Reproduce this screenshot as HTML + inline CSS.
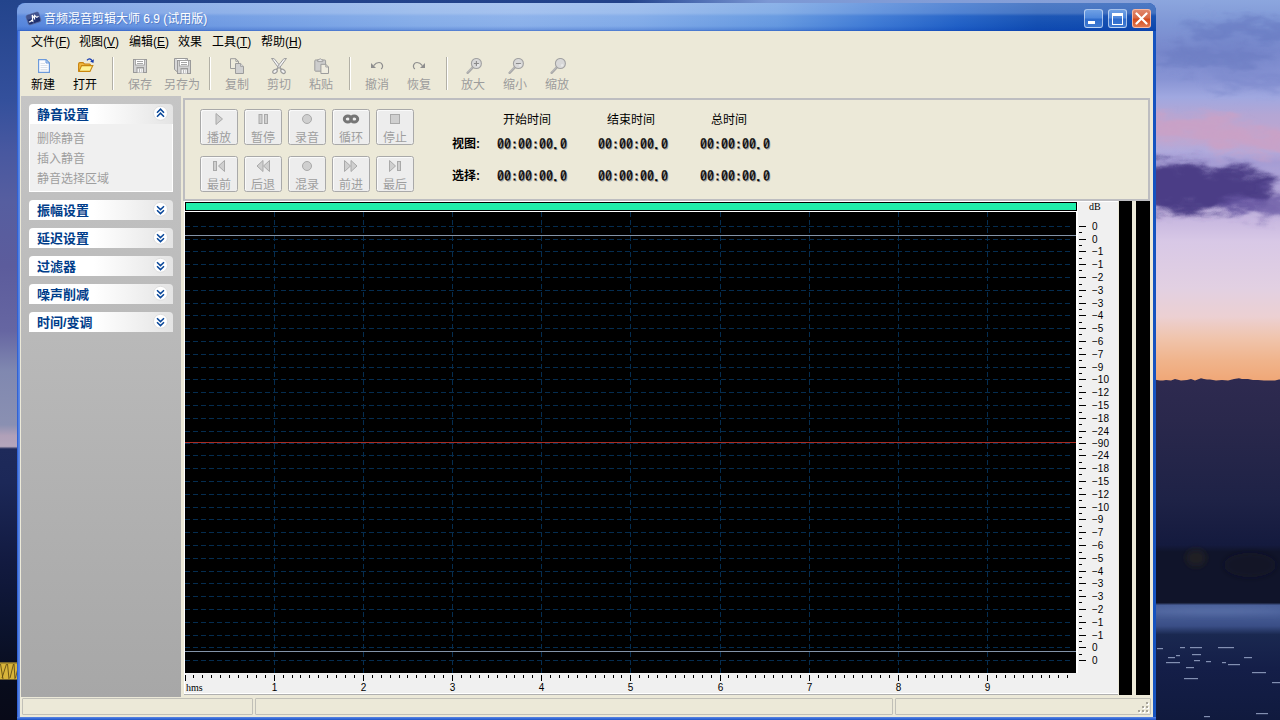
<!DOCTYPE html>
<html lang="zh-CN"><head><meta charset="utf-8"><title>音频混音剪辑大师 6.9 (试用版)</title>
<style>
html,body{margin:0;padding:0;width:1280px;height:720px;overflow:hidden;background:#1a2040;}
body{position:relative;font-family:"Liberation Sans","Noto Sans CJK SC",sans-serif;font-size:12px;color:#000;}
.a{position:absolute;}
#wall{position:absolute;left:0;top:0;}
#win{position:absolute;left:17px;top:3px;width:1139px;height:720px;border-radius:8px 8px 0 0;background:#1553c0;overflow:hidden;}
#lb{position:absolute;left:0;top:28px;width:3px;height:700px;background:linear-gradient(90deg,#2252cc,#4c7ce0 45%,#668ee6 100%);}
#rb{position:absolute;left:1136px;top:28px;width:3px;height:700px;background:#1553c0;}
#bb{position:absolute;left:0;top:714px;width:1139px;height:6px;background:linear-gradient(180deg,#5c88e2 0,#3a6cd8 1.5px,#1c54c4 3px,#1a50c0 6px);}
#title{position:absolute;left:0;top:0;width:1139px;height:28px;
 background:linear-gradient(180deg,rgba(255,255,255,.26) 0,rgba(255,255,255,.22) 10px,rgba(255,255,255,.05) 13px,rgba(255,255,255,0) 23px,rgba(0,50,170,.22) 27px,rgba(0,50,170,.5) 28px),
 linear-gradient(90deg,#5585dc 0,#6592e0 100px,#749fe4 250px,#84ace8 400px,#8ab0ea 500px,#80aae8 620px,#6498e0 760px,#3c78d4 860px,#2060c6 940px,#124eb2 1020px,#0f4aae 1139px);}
#ttext{position:absolute;left:27px;top:7px;font-size:12px;line-height:18px;color:#fff;white-space:nowrap;text-shadow:1px 1px 0 rgba(20,50,120,.25);}
.cb{position:absolute;top:6px;width:19px;height:19px;border-radius:3px;box-sizing:border-box;border:1px solid rgba(255,255,255,.55);}
#client{position:absolute;left:3px;top:28px;width:1133px;height:686px;background:#ece9d8;}
.menu{position:absolute;top:3px;height:16px;line-height:16px;font-size:12px;white-space:nowrap;}
.menu u{text-decoration:underline;text-underline-offset:1px;}
.tb{position:absolute;top:47px;width:40px;text-align:center;font-size:12px;line-height:14px;white-space:nowrap;}
.tb.d{color:#9c9c9c;}
.sep{position:absolute;top:26px;width:1px;height:33px;background:#b2b0a6;border-right:1px solid #fff;}
#side{position:absolute;left:1px;top:65px;width:160px;height:601px;background:linear-gradient(180deg,#c5c5c5,#a7a7a7);}
.ph{position:absolute;left:8px;width:144px;height:20px;border-radius:4px 4px 0 0;background:linear-gradient(90deg,#fff 0,#fff 45%,#e4e4e4 100%);}
.ph span{position:absolute;left:8px;top:3px;font-size:13px;line-height:16px;font-weight:bold;color:#003d8a;white-space:nowrap;}
.ph svg{position:absolute;left:123px;top:1px;}
.pb{position:absolute;left:8px;top:28px;width:142px;height:67px;background:#f0f0f0;border:1px solid #fff;border-top:none;}
.pi{position:absolute;left:7px;font-size:12px;line-height:14px;color:#9e9e9e;white-space:nowrap;}
#tp{position:absolute;left:163px;top:67px;width:963px;height:99px;border:2px solid #bdbdc0;}
.btn{position:absolute;width:36px;height:34px;border:1px solid #a9a9a9;border-radius:2.5px;background:#ededed;box-shadow:inset 1px 1px 0 #fafafa;}
.btn span{position:absolute;left:0;top:21px;width:36px;text-align:center;font-size:12px;line-height:14px;color:#9e9e9e;white-space:nowrap;}
.btn svg{position:absolute;left:10px;top:1px;}
.lab{position:absolute;font-size:12px;line-height:14px;white-space:nowrap;color:#000;}
.val{position:absolute;font-family:"IPAGothic","Liberation Mono",monospace;font-size:14px;line-height:14px;white-space:nowrap;color:#000;-webkit-text-stroke:.3px #000;text-shadow:1px 1px 0 #9c9c9c;}
.lab.b{font-weight:bold;}
#wave{position:absolute;left:164px;top:170px;}
.st{position:absolute;top:670px;height:15px;border:1px solid #c1c0b8;border-radius:1px;}
</style></head>
<body>
<svg id="wall" width="1280" height="720" viewBox="0 0 1280 720">
<defs>
<linearGradient id="gl" x1="0" y1="0" x2="0" y2="1">
<stop offset="0" stop-color="#23448c"/><stop offset="0.14" stop-color="#34509c"/><stop offset="0.21" stop-color="#4858a0"/>
<stop offset="0.28" stop-color="#565ea0"/><stop offset="0.37" stop-color="#5c5c9c"/><stop offset="0.46" stop-color="#6666a2"/>
<stop offset="0.515" stop-color="#8088b0"/><stop offset="0.59" stop-color="#8a90b2"/><stop offset="0.605" stop-color="#b0a0b8"/>
<stop offset="0.62" stop-color="#b4a6bc"/><stop offset="0.6235" stop-color="#1e2a5a"/><stop offset="0.67" stop-color="#1c2858"/><stop offset="0.78" stop-color="#121a40"/>
<stop offset="0.86" stop-color="#0c1430"/><stop offset="0.95" stop-color="#080c1c"/><stop offset="1" stop-color="#080a18"/>
</linearGradient>
<linearGradient id="gt" x1="0" y1="0" x2="1" y2="0">
<stop offset="0" stop-color="#23448c"/><stop offset="0.49" stop-color="#22428a"/><stop offset="0.54" stop-color="#4a6ab0"/>
<stop offset="0.60" stop-color="#7c98d4"/><stop offset="1" stop-color="#8ea6dc"/>
</linearGradient>
<linearGradient id="gr" x1="0" y1="0" x2="0" y2="1">
<stop offset="0" stop-color="#8ca6de"/><stop offset="0.03" stop-color="#8098d6"/><stop offset="0.07" stop-color="#7888cc"/>
<stop offset="0.11" stop-color="#8894d4"/><stop offset="0.135" stop-color="#a0a8e0"/><stop offset="0.16" stop-color="#b4a6d4"/>
<stop offset="0.19" stop-color="#bea6d0"/><stop offset="0.21" stop-color="#b0aadc"/><stop offset="0.225" stop-color="#a49cd4"/>
<stop offset="0.305" stop-color="#c8b8e0"/><stop offset="0.335" stop-color="#d8c8e6"/><stop offset="0.40" stop-color="#e2d0e2"/>
<stop offset="0.44" stop-color="#ecd0d2"/><stop offset="0.47" stop-color="#f0c4ac"/><stop offset="0.50" stop-color="#f0b48c"/>
<stop offset="0.527" stop-color="#f0a878"/><stop offset="1" stop-color="#f0a878"/>
</linearGradient>
<linearGradient id="gm" x1="0" y1="0" x2="0" y2="1">
<stop offset="0" stop-color="#2e2a50"/><stop offset="0.12" stop-color="#2a284c"/><stop offset="0.355" stop-color="#1e2246"/>
<stop offset="0.488" stop-color="#141a3e"/><stop offset="0.508" stop-color="#10142a"/><stop offset="0.657" stop-color="#10142a"/>
<stop offset="0.664" stop-color="#485e98"/><stop offset="0.684" stop-color="#4a609a"/><stop offset="0.725" stop-color="#3a4e86"/>
<stop offset="0.75" stop-color="#1a2850"/><stop offset="0.85" stop-color="#141e48"/><stop offset="1" stop-color="#101a3e"/>
</linearGradient>
<filter id="bl" x="-30%" y="-60%" width="160%" height="220%"><feGaussianBlur stdDeviation="5" result="b"/><feTurbulence type="fractalNoise" baseFrequency="0.035 0.09" numOctaves="3" seed="7" result="n"/><feDisplacementMap in="b" in2="n" scale="26" xChannelSelector="R" yChannelSelector="G"/></filter>
<filter id="bs" x="-30%" y="-60%" width="160%" height="220%"><feGaussianBlur stdDeviation="3"/></filter>
</defs>
<rect x="0" y="0" width="1280" height="12" fill="url(#gt)"/>
<rect x="0" y="0" width="20" height="720" fill="url(#gl)"/>
<rect x="0" y="662.5" width="18" height="17" fill="#d8b43a"/>
<path d="M0.5 664 L3 679 M2 678 L6.5 664 M7.5 664 L9 679 M10 678 L13.5 664 M14 664 L15 679 M15.5 678 L18 668" stroke="#5c4612" stroke-width="1" fill="none" opacity=".85"/>
<rect x="0" y="662.5" width="18" height="1.5" fill="#8c7424" opacity=".6"/>
<rect x="1150" y="0" width="130" height="720" fill="url(#gr)"/>
<g filter="url(#bl)">
<ellipse cx="1245" cy="30" rx="60" ry="10" fill="#6474be" opacity=".6"/><ellipse cx="1215" cy="58" rx="60" ry="11" fill="#6878c0" opacity=".6"/><ellipse cx="1250" cy="82" rx="45" ry="7" fill="#7482c8" opacity=".5"/>
<ellipse cx="1190" cy="128" rx="60" ry="13" fill="#cca0c4" opacity=".8"/>
<ellipse cx="1260" cy="142" rx="50" ry="11" fill="#cca0c4" opacity=".8"/>
<ellipse cx="1190" cy="188" rx="85" ry="24" fill="#4c3c86"/>
<ellipse cx="1175" cy="182" rx="50" ry="20" fill="#4c3c86"/>
<ellipse cx="1260" cy="205" rx="40" ry="10" fill="#6454a0" opacity=".8"/>
</g>
<path d="M1150 720 L1150 378.9 L1154 379.5 L1160 380.5 L1163 380.5 L1166 380.0 L1171 380.5 L1175 378.9 L1181 380.5 L1187 380.0 L1191 378.9 L1195 380.5 L1201 378.3 L1204 378.9 L1207 379.5 L1210 379.5 L1216 380.5 L1222 380.0 L1228 380.5 L1234 378.9 L1239 378.3 L1242 378.9 L1248 378.9 L1253 380.0 L1258 380.0 L1264 380.5 L1269 380.5 L1275 380.5 L1279 379.5 L1284 379.5 L1284 720 Z" fill="url(#gm)"/>
<g filter="url(#bs)">
<ellipse cx="1196" cy="558" rx="10" ry="9" fill="#3a3018" opacity=".4"/><ellipse cx="1250" cy="565" rx="26" ry="12" fill="#1c1a20" opacity=".5"/>
<ellipse cx="1215" cy="611" rx="70" ry="3" fill="#6a80b4" opacity=".5"/>
</g>
<g fill="#a8b6d6" opacity=".75"><rect x="1157" y="648" width="6" height="1.2"/><rect x="1180" y="647" width="5" height="1.2"/><rect x="1190" y="647" width="12" height="1.2"/><rect x="1218" y="647" width="16" height="1.2"/><rect x="1168" y="657" width="7" height="1.2"/><rect x="1176" y="655" width="4" height="1.2"/><rect x="1192" y="654" width="9" height="1.2"/><rect x="1166" y="662" width="14" height="1.2"/><rect x="1194" y="660" width="6" height="1.2"/><rect x="1206" y="661" width="5" height="1.2"/><rect x="1222" y="662" width="4" height="1.2"/><rect x="1228" y="664" width="12" height="1.2"/><rect x="1244" y="657" width="8" height="1.2"/><rect x="1186" y="667" width="8" height="1.2"/><rect x="1252" y="672" width="14" height="1.2"/><rect x="1184" y="678" width="14" height="1.2"/><rect x="1272" y="682" width="8" height="1.2"/><rect x="1256" y="713" width="12" height="1.2"/><rect x="1204" y="716" width="6" height="1.2"/></g>
</svg>
<div id="win">
<div id="title"></div>
<svg class="a" style="left:8px;top:7px" width="17" height="17" viewBox="0 0 17 17"><g transform="rotate(-18 8.5 8.5)"><rect x="2" y="3.5" width="13" height="10" rx="1.5" fill="#1d2f6e" stroke="#5a6aa0" stroke-width="0.8"/><rect x="2.5" y="4" width="12" height="4" rx="1" fill="#54649c" opacity=".7"/><path d="M3 10.5 L5 10.5 L6 9.5 L7 11 L8.3 4.8 L9.5 9 L10.5 6 L12 8.5 L14 8" fill="none" stroke="#fff" stroke-width="1.1"/></g></svg>
<div id="ttext">音频混音剪辑大师 6.9 (试用版)</div>
<div class="cb" style="left:1067px;background:linear-gradient(180deg,#6fa0e4 0,#4f88dc 45%,#2f6ccc 55%,#3f7ad2 100%);"><div class="a" style="left:3px;top:11px;width:7px;height:3px;background:#fff"></div></div>
<div class="cb" style="left:1091px;background:linear-gradient(180deg,#6fa0e4 0,#4f88dc 45%,#2f6ccc 55%,#3f7ad2 100%);"><div class="a" style="left:3px;top:3px;width:9px;height:8px;border:1px solid #fff;border-top-width:3px;"></div></div>
<div class="cb" style="left:1115px;border-color:rgba(255,200,180,.8);background:linear-gradient(180deg,#e0876c 0,#d86a48 45%,#d44a1c 55%,#e07850 100%);"><svg class="a" style="left:2px;top:2px" width="13" height="13" viewBox="0 0 13 13"><path d="M1.5 1.5 L11.5 11.5 M11.5 1.5 L1.5 11.5" stroke="#fff" stroke-width="2.2" stroke-linecap="round"/></svg></div>
<div id="lb"></div><div id="rb"></div>
<div id="client">
<div class="menu" style="left:11px">文件(<u>F</u>)</div>
<div class="menu" style="left:59px">视图(<u>V</u>)</div>
<div class="menu" style="left:109px">编辑(<u>E</u>)</div>
<div class="menu" style="left:158px">效果</div>
<div class="menu" style="left:192px">工具(<u>T</u>)</div>
<div class="menu" style="left:241px">帮助(<u>H</u>)</div>
<svg class="a" style="left:15px;top:27px" width="16" height="16" viewBox="0 0 16 16"><path d="M3.6 1.6 H11 L14.4 5 V14.4 H3.6 Z" fill="#fdfdff" stroke="#6c9adb" stroke-width="1.2"/><path d="M11 1.6 V5 H14.4 Z" fill="#c9dcf6" stroke="#6c9adb" stroke-width="1"/><path d="M5.5 5.5H10M5.5 7.5H12.5M5.5 9.5H12.5M5.5 11.5H12.5M5.5 13H12.5" stroke="#dde2ea" stroke-width="1"/></svg>
<div class="tb" style="left:3px">新建</div>
<svg class="a" style="left:57px;top:26px" width="18" height="17" viewBox="0 0 18 17"><path d="M1.6 14 V7 Q1.6 5.6 3 5.6 H6 L7.4 7 H12.4 Q13.4 7 13.4 8 V9.5 L11.5 14.4 H2.4 Q1.6 14.4 1.6 14 Z" fill="#f0b840" stroke="#c8820e" stroke-width="1.1"/><path d="M2 14.4 L4.6 8.6 H15.8 L13 14.4 Z" fill="#fff394" stroke="#c8860e" stroke-width="1.1"/><path d="M10 3.4 Q12.4 0.4 15.2 3.6" fill="none" stroke="#1238b0" stroke-width="1.3"/><path d="M16.9 2.2 L16.4 6 L13.2 4.4 Z" fill="#1238b0"/></svg>
<div class="tb" style="left:45px">打开</div>
<svg class="a" style="left:112px;top:27px" width="16" height="16" viewBox="0 0 16 16"><rect x="1.5" y="1.5" width="13" height="13" fill="#d2d2d2" stroke="#9a9a9a"/><rect x="3.5" y="1.5" width="9" height="5.5" fill="#fff" stroke="#9a9a9a" stroke-width=".8"/><rect x="5" y="3" width="6" height="1" fill="#a6a6a6"/><rect x="5" y="5" width="6" height="1" fill="#a6a6a6"/><rect x="4.5" y="9" width="7.5" height="6" fill="#9a9a9a"/><rect x="5.5" y="10.5" width="5.5" height="4" fill="#f6f6f6"/><rect x="7" y="10.5" width="1" height="4" fill="#b8b8b8"/><rect x="9.2" y="10.5" width="1" height="4" fill="#d0d0d0"/></svg>
<div class="tb d" style="left:100px">保存</div>
<svg class="a" style="left:154px;top:26px" width="18" height="18" viewBox="0 0 18 18"><path d="M0.5 1.5 H13.5 V3.5 H3.5 V15 L0.5 12.5 Z" fill="#d8d8d8" stroke="#9a9a9a"/><path d="M3 2.5H11" stroke="#fff" stroke-width="1"/><rect x="3.5" y="3.5" width="13" height="13" fill="#d2d2d2" stroke="#9a9a9a"/><rect x="5.5" y="3.5" width="9" height="5.5" fill="#fff" stroke="#9a9a9a" stroke-width=".8"/><rect x="7" y="5" width="6" height="1" fill="#a6a6a6"/><rect x="7" y="7" width="6" height="1" fill="#a6a6a6"/><rect x="6.5" y="11" width="7.5" height="6" fill="#9a9a9a"/><rect x="7.5" y="12.5" width="5.5" height="4" fill="#f6f6f6"/><rect x="9" y="12.5" width="1" height="4" fill="#b8b8b8"/><rect x="11.2" y="12.5" width="1" height="4" fill="#d0d0d0"/></svg>
<div class="tb d" style="left:142px">另存为</div>
<svg class="a" style="left:209px;top:27px" width="16" height="17" viewBox="0 0 16 17"><path d="M1.5 0.7 H6.8 L9.5 3.4 V10.5 H1.5 Z" fill="#eeebdc" stroke="#9c9c9c"/><path d="M6.8 0.7 V3.4 H9.5" fill="none" stroke="#9c9c9c" stroke-width=".9"/><path d="M6.5 5.5 H11.6 L14.5 8.4 V15.5 H6.5 Z" fill="#d0d0d0" stroke="#9c9c9c"/><path d="M11.6 5.5 V8.4 H14.5" fill="#e2e2e2" stroke="#9c9c9c" stroke-width=".9"/></svg>
<div class="tb d" style="left:197px">复制</div>
<svg class="a" style="left:251px;top:27px" width="16" height="17" viewBox="0 0 16 17"><path d="M0.5 0.4 L3.3 0.8 L9.6 8.6 L7.6 10 Z" fill="#f4f4f4" stroke="#9c9c9c" stroke-width="1"/><path d="M15.5 0.4 L12.7 0.8 L6.4 8.6 L8.4 10 Z" fill="#f4f4f4" stroke="#9c9c9c" stroke-width="1"/><path d="M7.2 9.6 L5.2 12 M8.8 9.6 L10.8 12" stroke="#9c9c9c" stroke-width="1.6"/><ellipse cx="4" cy="13.4" rx="2.5" ry="1.7" transform="rotate(-38 4 13.4)" fill="#f0f0f0" stroke="#9c9c9c" stroke-width="1.2"/><ellipse cx="12" cy="13.4" rx="2.5" ry="1.7" transform="rotate(38 12 13.4)" fill="#f0f0f0" stroke="#9c9c9c" stroke-width="1.2"/><circle cx="8" cy="8.6" r=".9" fill="#fff" stroke="#9c9c9c" stroke-width=".6"/></svg>
<div class="tb d" style="left:239px">剪切</div>
<svg class="a" style="left:293px;top:27px" width="17" height="17" viewBox="0 0 17 17"><rect x="1.8" y="2" width="10.8" height="11.2" rx=".8" fill="#cdcdcd" stroke="#9c9c9c"/><path d="M4.6 3.6 V1.8 H6 L7.2 0.5 L8.4 1.8 H9.8 V3.6 Z" fill="#e6e6e6" stroke="#9c9c9c" stroke-width=".9"/><path d="M7.9 6.3 H12.8 L15.5 9 V15.5 H7.9 Z" fill="#efecdf" stroke="#9c9c9c"/><path d="M12.8 6.3 V9 H15.5" fill="none" stroke="#9c9c9c" stroke-width=".9"/></svg>
<div class="tb d" style="left:281px">粘贴</div>
<svg class="a" style="left:349px;top:27px" width="16" height="16" viewBox="0 0 16 16"><path d="M4.6 7.6 Q7 4.5 10 4.5 A3.6 3.6 0 0 1 12.1 11" fill="none" stroke="#8e8e8e" stroke-width="1.15"/><path d="M2 5 L2 9.9 L7 9.9 Z" fill="#8e8e8e"/></svg>
<div class="tb d" style="left:337px">撤消</div>
<svg class="a" style="left:391px;top:27px" width="16" height="16" viewBox="0 0 16 16"><path d="M11.4 7.6 Q9 4.5 6 4.5 A3.6 3.6 0 0 0 3.9 11" fill="none" stroke="#8e8e8e" stroke-width="1.15"/><path d="M14 5 L14 9.9 L9 9.9 Z" fill="#8e8e8e"/></svg>
<div class="tb d" style="left:379px">恢复</div>
<svg class="a" style="left:445px;top:27px" width="18" height="17" viewBox="0 0 18 17"><path d="M8 9.2 L2.6 14.8" stroke="#a8a8a8" stroke-width="2.4" stroke-linecap="round"/><path d="M8 8.6 L2.4 14.2" stroke="#c8c8c8" stroke-width=".8"/><circle cx="11.4" cy="5.5" r="5" fill="#d8d8d8" stroke="#a2a2a2" stroke-width="1.1"/><circle cx="13.2" cy="7.4" r="1.3" fill="#e8e8e8"/><path d="M8.9 5.5 H13.9 M11.4 3 V8" stroke="#8a8a8a" stroke-width="1.1"/></svg>
<div class="tb d" style="left:433px">放大</div>
<svg class="a" style="left:487px;top:27px" width="18" height="17" viewBox="0 0 18 17"><path d="M8 9.2 L2.6 14.8" stroke="#a8a8a8" stroke-width="2.4" stroke-linecap="round"/><path d="M8 8.6 L2.4 14.2" stroke="#c8c8c8" stroke-width=".8"/><circle cx="11.4" cy="5.5" r="5" fill="#d8d8d8" stroke="#a2a2a2" stroke-width="1.1"/><circle cx="13.2" cy="7.4" r="1.3" fill="#e8e8e8"/><path d="M8.9 5.5 H13.9" stroke="#8a8a8a" stroke-width="1.1"/></svg>
<div class="tb d" style="left:475px">缩小</div>
<svg class="a" style="left:529px;top:27px" width="18" height="17" viewBox="0 0 18 17"><path d="M8 9.2 L2.6 14.8" stroke="#a8a8a8" stroke-width="2.4" stroke-linecap="round"/><path d="M8 8.6 L2.4 14.2" stroke="#c8c8c8" stroke-width=".8"/><circle cx="11.4" cy="5.5" r="5" fill="#d8d8d8" stroke="#a2a2a2" stroke-width="1.1"/><circle cx="13.2" cy="7.4" r="1.3" fill="#e8e8e8"/></svg>
<div class="tb d" style="left:517px">缩放</div>
<div class="sep" style="left:92px"></div>
<div class="sep" style="left:189px"></div>
<div class="sep" style="left:329px"></div>
<div class="sep" style="left:426px"></div>
<div id="side">
<div class="ph" style="top:8px"><span>静音设置</span><svg width="18" height="18" viewBox="0 0 18 18"><circle cx="8.5" cy="8.3" r="7" fill="#fff" stroke="#dedede" stroke-width="1"/><path d="M5 7.8 L8.5 4.2 L12 7.8 M5 11.8 L8.5 8.2 L12 11.8" fill="none" stroke="#0a489a" stroke-width="1.5"/></svg></div>
<div class="pb"><div class="pi" style="top:8px">删除静音</div><div class="pi" style="top:28px">插入静音</div><div class="pi" style="top:48px">静音选择区域</div></div>
<div class="ph" style="top:104px"><span>振幅设置</span><svg width="18" height="18" viewBox="0 0 18 18"><circle cx="8.5" cy="8.3" r="7" fill="#fff" stroke="#dedede" stroke-width="1"/><path d="M5 5.2 L8.5 8.6 L12 5.2 M5 9.2 L8.5 12.6 L12 9.2" fill="none" stroke="#0a489a" stroke-width="1.5"/></svg></div>
<div class="ph" style="top:132px"><span>延迟设置</span><svg width="18" height="18" viewBox="0 0 18 18"><circle cx="8.5" cy="8.3" r="7" fill="#fff" stroke="#dedede" stroke-width="1"/><path d="M5 5.2 L8.5 8.6 L12 5.2 M5 9.2 L8.5 12.6 L12 9.2" fill="none" stroke="#0a489a" stroke-width="1.5"/></svg></div>
<div class="ph" style="top:160px"><span>过滤器</span><svg width="18" height="18" viewBox="0 0 18 18"><circle cx="8.5" cy="8.3" r="7" fill="#fff" stroke="#dedede" stroke-width="1"/><path d="M5 5.2 L8.5 8.6 L12 5.2 M5 9.2 L8.5 12.6 L12 9.2" fill="none" stroke="#0a489a" stroke-width="1.5"/></svg></div>
<div class="ph" style="top:188px"><span>噪声削减</span><svg width="18" height="18" viewBox="0 0 18 18"><circle cx="8.5" cy="8.3" r="7" fill="#fff" stroke="#dedede" stroke-width="1"/><path d="M5 5.2 L8.5 8.6 L12 5.2 M5 9.2 L8.5 12.6 L12 9.2" fill="none" stroke="#0a489a" stroke-width="1.5"/></svg></div>
<div class="ph" style="top:216px"><span>时间/变调</span><svg width="18" height="18" viewBox="0 0 18 18"><circle cx="8.5" cy="8.3" r="7" fill="#fff" stroke="#dedede" stroke-width="1"/><path d="M5 5.2 L8.5 8.6 L12 5.2 M5 9.2 L8.5 12.6 L12 9.2" fill="none" stroke="#0a489a" stroke-width="1.5"/></svg></div>
</div>
<div id="tp">
<div class="btn" style="left:15px;top:9px"><svg width="16" height="16" viewBox="0 0 16 16"><path d="M5 2.5 L11.5 8 L5 13.5 Z" fill="#cfcfcf" stroke="#a9a9a9"/></svg><span>播放</span></div>
<div class="btn" style="left:59px;top:9px"><svg width="16" height="16" viewBox="0 0 16 16"><rect x="4" y="3.5" width="3" height="9" fill="#cfcfcf" stroke="#a9a9a9"/><rect x="9.5" y="3.5" width="3" height="9" fill="#cfcfcf" stroke="#a9a9a9"/></svg><span>暂停</span></div>
<div class="btn" style="left:103px;top:9px"><svg width="16" height="16" viewBox="0 0 16 16"><circle cx="8" cy="8" r="4.5" fill="#cfcfcf" stroke="#a9a9a9"/></svg><span>录音</span></div>
<div class="btn" style="left:147px;top:9px"><svg style="left:9px" width="18" height="16" viewBox="0 0 18 16"><ellipse cx="5.8" cy="8" rx="3.5" ry="3" fill="none" stroke="#767676" stroke-width="3"/><ellipse cx="12.2" cy="8" rx="3.5" ry="3" fill="none" stroke="#767676" stroke-width="3"/></svg><span>循环</span></div>
<div class="btn" style="left:191px;top:9px"><svg width="16" height="16" viewBox="0 0 16 16"><rect x="3.5" y="3.5" width="9" height="9" fill="#cfcfcf" stroke="#a9a9a9"/></svg><span>停止</span></div>
<div class="btn" style="left:15px;top:56px"><svg width="16" height="16" viewBox="0 0 16 16"><rect x="2.5" y="3.5" width="3" height="9" fill="#cfcfcf" stroke="#a9a9a9"/><path d="M13.5 2.5 L7.5 8 L13.5 13.5 Z" fill="#cfcfcf" stroke="#a9a9a9"/></svg><span>最前</span></div>
<div class="btn" style="left:59px;top:56px"><svg width="16" height="16" viewBox="0 0 16 16"><path d="M8 2.5 L2 8 L8 13.5 Z" fill="#cfcfcf" stroke="#a9a9a9"/><path d="M14.5 2.5 L8.5 8 L14.5 13.5 Z" fill="#cfcfcf" stroke="#a9a9a9"/></svg><span>后退</span></div>
<div class="btn" style="left:103px;top:56px"><svg width="16" height="16" viewBox="0 0 16 16"><circle cx="8" cy="8" r="4.5" fill="#cfcfcf" stroke="#a9a9a9"/></svg><span>混录</span></div>
<div class="btn" style="left:147px;top:56px"><svg width="16" height="16" viewBox="0 0 16 16"><path d="M1.5 2.5 L7.5 8 L1.5 13.5 Z" fill="#cfcfcf" stroke="#a9a9a9"/><path d="M8 2.5 L14 8 L8 13.5 Z" fill="#cfcfcf" stroke="#a9a9a9"/></svg><span>前进</span></div>
<div class="btn" style="left:191px;top:56px"><svg width="16" height="16" viewBox="0 0 16 16"><path d="M2.5 2.5 L8.5 8 L2.5 13.5 Z" fill="#cfcfcf" stroke="#a9a9a9"/><rect x="10.5" y="3.5" width="3" height="9" fill="#cfcfcf" stroke="#a9a9a9"/></svg><span>最后</span></div>
<div class="lab" style="left:318px;top:13px">开始时间</div>
<div class="lab" style="left:422px;top:13px">结束时间</div>
<div class="lab" style="left:526px;top:13px">总时间</div>
<div class="lab b" style="left:267px;top:37px">视图:</div>
<div class="lab b" style="left:267px;top:69px">选择:</div>
<div class="val" style="left:312px;top:37px">00:00:00.0</div>
<div class="val" style="left:413px;top:37px">00:00:00.0</div>
<div class="val" style="left:515px;top:37px">00:00:00.0</div>
<div class="val" style="left:312px;top:69px">00:00:00.0</div>
<div class="val" style="left:413px;top:69px">00:00:00.0</div>
<div class="val" style="left:515px;top:69px">00:00:00.0</div>
</div>
<svg id="wave" width="967" height="496" viewBox="0 0 967 496" shape-rendering="crispEdges" font-family="Liberation Sans, sans-serif">
<rect x="0" y="0" width="934" height="493" fill="#fff"/>
<rect x="0" y="493" width="934" height="1" fill="#b0b0b0"/>
<rect x="1" y="1" width="892" height="9" fill="#000"/>
<rect x="2" y="2" width="890" height="7" fill="#20eeaa"/>
<rect x="1" y="11" width="891" height="461" fill="#000"/>
<rect x="892" y="11" width="1" height="462" fill="#fff"/>
<rect x="1" y="472" width="933" height="20" fill="#f0f0f0"/>
<rect x="894" y="1" width="40" height="471" fill="#f0f0f0"/>
<line x1="1" y1="25.5" x2="889" y2="25.5" stroke="#052d50" stroke-width="1" stroke-dasharray="5 3"/>
<line x1="1" y1="38.5" x2="889" y2="38.5" stroke="#052d50" stroke-width="1" stroke-dasharray="5 3"/>
<line x1="1" y1="50.5" x2="889" y2="50.5" stroke="#052d50" stroke-width="1" stroke-dasharray="5 3"/>
<line x1="1" y1="63.5" x2="889" y2="63.5" stroke="#052d50" stroke-width="1" stroke-dasharray="5 3"/>
<line x1="1" y1="76.5" x2="889" y2="76.5" stroke="#052d50" stroke-width="1" stroke-dasharray="5 3"/>
<line x1="1" y1="89.5" x2="889" y2="89.5" stroke="#052d50" stroke-width="1" stroke-dasharray="5 3"/>
<line x1="1" y1="102.5" x2="889" y2="102.5" stroke="#052d50" stroke-width="1" stroke-dasharray="5 3"/>
<line x1="1" y1="114.5" x2="889" y2="114.5" stroke="#052d50" stroke-width="1" stroke-dasharray="5 3"/>
<line x1="1" y1="127.5" x2="889" y2="127.5" stroke="#052d50" stroke-width="1" stroke-dasharray="5 3"/>
<line x1="1" y1="140.5" x2="889" y2="140.5" stroke="#052d50" stroke-width="1" stroke-dasharray="5 3"/>
<line x1="1" y1="153.5" x2="889" y2="153.5" stroke="#052d50" stroke-width="1" stroke-dasharray="5 3"/>
<line x1="1" y1="166.5" x2="889" y2="166.5" stroke="#052d50" stroke-width="1" stroke-dasharray="5 3"/>
<line x1="1" y1="178.5" x2="889" y2="178.5" stroke="#052d50" stroke-width="1" stroke-dasharray="5 3"/>
<line x1="1" y1="191.5" x2="889" y2="191.5" stroke="#052d50" stroke-width="1" stroke-dasharray="5 3"/>
<line x1="1" y1="204.5" x2="889" y2="204.5" stroke="#052d50" stroke-width="1" stroke-dasharray="5 3"/>
<line x1="1" y1="217.5" x2="889" y2="217.5" stroke="#052d50" stroke-width="1" stroke-dasharray="5 3"/>
<line x1="1" y1="230.5" x2="889" y2="230.5" stroke="#052d50" stroke-width="1" stroke-dasharray="5 3"/>
<line x1="1" y1="242.5" x2="889" y2="242.5" stroke="#052d50" stroke-width="1" stroke-dasharray="5 3"/>
<line x1="1" y1="241.5" x2="892" y2="241.5" stroke="#aa2c22" stroke-width="1"/>
<line x1="1" y1="254.5" x2="889" y2="254.5" stroke="#052d50" stroke-width="1" stroke-dasharray="5 3"/>
<line x1="1" y1="267.5" x2="889" y2="267.5" stroke="#052d50" stroke-width="1" stroke-dasharray="5 3"/>
<line x1="1" y1="280.5" x2="889" y2="280.5" stroke="#052d50" stroke-width="1" stroke-dasharray="5 3"/>
<line x1="1" y1="293.5" x2="889" y2="293.5" stroke="#052d50" stroke-width="1" stroke-dasharray="5 3"/>
<line x1="1" y1="306.5" x2="889" y2="306.5" stroke="#052d50" stroke-width="1" stroke-dasharray="5 3"/>
<line x1="1" y1="318.5" x2="889" y2="318.5" stroke="#052d50" stroke-width="1" stroke-dasharray="5 3"/>
<line x1="1" y1="331.5" x2="889" y2="331.5" stroke="#052d50" stroke-width="1" stroke-dasharray="5 3"/>
<line x1="1" y1="344.5" x2="889" y2="344.5" stroke="#052d50" stroke-width="1" stroke-dasharray="5 3"/>
<line x1="1" y1="357.5" x2="889" y2="357.5" stroke="#052d50" stroke-width="1" stroke-dasharray="5 3"/>
<line x1="1" y1="370.5" x2="889" y2="370.5" stroke="#052d50" stroke-width="1" stroke-dasharray="5 3"/>
<line x1="1" y1="382.5" x2="889" y2="382.5" stroke="#052d50" stroke-width="1" stroke-dasharray="5 3"/>
<line x1="1" y1="395.5" x2="889" y2="395.5" stroke="#052d50" stroke-width="1" stroke-dasharray="5 3"/>
<line x1="1" y1="408.5" x2="889" y2="408.5" stroke="#052d50" stroke-width="1" stroke-dasharray="5 3"/>
<line x1="1" y1="421.5" x2="889" y2="421.5" stroke="#052d50" stroke-width="1" stroke-dasharray="5 3"/>
<line x1="1" y1="434.5" x2="889" y2="434.5" stroke="#052d50" stroke-width="1" stroke-dasharray="5 3"/>
<line x1="1" y1="446.5" x2="889" y2="446.5" stroke="#052d50" stroke-width="1" stroke-dasharray="5 3"/>
<line x1="1" y1="459.5" x2="889" y2="459.5" stroke="#052d50" stroke-width="1" stroke-dasharray="5 3"/>
<line x1="90.5" y1="11" x2="90.5" y2="472" stroke="#052d50" stroke-width="1" stroke-dasharray="5 3"/>
<line x1="179.5" y1="11" x2="179.5" y2="472" stroke="#052d50" stroke-width="1" stroke-dasharray="5 3"/>
<line x1="268.5" y1="11" x2="268.5" y2="472" stroke="#052d50" stroke-width="1" stroke-dasharray="5 3"/>
<line x1="357.5" y1="11" x2="357.5" y2="472" stroke="#052d50" stroke-width="1" stroke-dasharray="5 3"/>
<line x1="446.5" y1="11" x2="446.5" y2="472" stroke="#052d50" stroke-width="1" stroke-dasharray="5 3"/>
<line x1="536.5" y1="11" x2="536.5" y2="472" stroke="#052d50" stroke-width="1" stroke-dasharray="5 3"/>
<line x1="625.5" y1="11" x2="625.5" y2="472" stroke="#052d50" stroke-width="1" stroke-dasharray="5 3"/>
<line x1="714.5" y1="11" x2="714.5" y2="472" stroke="#052d50" stroke-width="1" stroke-dasharray="5 3"/>
<line x1="803.5" y1="11" x2="803.5" y2="472" stroke="#052d50" stroke-width="1" stroke-dasharray="5 3"/>
<line x1="1" y1="34.5" x2="892" y2="34.5" stroke="#8494a8" stroke-width="1"/>
<line x1="1" y1="450.5" x2="892" y2="450.5" stroke="#8494a8" stroke-width="1"/>
<rect x="1" y="474" width="1" height="6" fill="#000"/>
<rect x="9" y="474" width="1" height="3" fill="#000"/>
<rect x="18" y="474" width="1" height="3" fill="#000"/>
<rect x="27" y="474" width="1" height="3" fill="#000"/>
<rect x="36" y="474" width="1" height="3" fill="#000"/>
<rect x="45" y="474" width="1" height="3" fill="#000"/>
<rect x="54" y="474" width="1" height="3" fill="#000"/>
<rect x="63" y="474" width="1" height="3" fill="#000"/>
<rect x="72" y="474" width="1" height="3" fill="#000"/>
<rect x="81" y="474" width="1" height="3" fill="#000"/>
<rect x="90" y="474" width="1" height="6" fill="#000"/>
<rect x="99" y="474" width="1" height="3" fill="#000"/>
<rect x="108" y="474" width="1" height="3" fill="#000"/>
<rect x="116" y="474" width="1" height="3" fill="#000"/>
<rect x="125" y="474" width="1" height="3" fill="#000"/>
<rect x="134" y="474" width="1" height="3" fill="#000"/>
<rect x="143" y="474" width="1" height="3" fill="#000"/>
<rect x="152" y="474" width="1" height="3" fill="#000"/>
<rect x="161" y="474" width="1" height="3" fill="#000"/>
<rect x="170" y="474" width="1" height="3" fill="#000"/>
<rect x="179" y="474" width="1" height="6" fill="#000"/>
<rect x="188" y="474" width="1" height="3" fill="#000"/>
<rect x="197" y="474" width="1" height="3" fill="#000"/>
<rect x="206" y="474" width="1" height="3" fill="#000"/>
<rect x="215" y="474" width="1" height="3" fill="#000"/>
<rect x="223" y="474" width="1" height="3" fill="#000"/>
<rect x="232" y="474" width="1" height="3" fill="#000"/>
<rect x="241" y="474" width="1" height="3" fill="#000"/>
<rect x="250" y="474" width="1" height="3" fill="#000"/>
<rect x="259" y="474" width="1" height="3" fill="#000"/>
<rect x="268" y="474" width="1" height="6" fill="#000"/>
<rect x="277" y="474" width="1" height="3" fill="#000"/>
<rect x="286" y="474" width="1" height="3" fill="#000"/>
<rect x="295" y="474" width="1" height="3" fill="#000"/>
<rect x="304" y="474" width="1" height="3" fill="#000"/>
<rect x="313" y="474" width="1" height="3" fill="#000"/>
<rect x="322" y="474" width="1" height="3" fill="#000"/>
<rect x="330" y="474" width="1" height="3" fill="#000"/>
<rect x="339" y="474" width="1" height="3" fill="#000"/>
<rect x="348" y="474" width="1" height="3" fill="#000"/>
<rect x="357" y="474" width="1" height="6" fill="#000"/>
<rect x="366" y="474" width="1" height="3" fill="#000"/>
<rect x="375" y="474" width="1" height="3" fill="#000"/>
<rect x="384" y="474" width="1" height="3" fill="#000"/>
<rect x="393" y="474" width="1" height="3" fill="#000"/>
<rect x="402" y="474" width="1" height="3" fill="#000"/>
<rect x="411" y="474" width="1" height="3" fill="#000"/>
<rect x="420" y="474" width="1" height="3" fill="#000"/>
<rect x="429" y="474" width="1" height="3" fill="#000"/>
<rect x="437" y="474" width="1" height="3" fill="#000"/>
<rect x="446" y="474" width="1" height="6" fill="#000"/>
<rect x="455" y="474" width="1" height="3" fill="#000"/>
<rect x="464" y="474" width="1" height="3" fill="#000"/>
<rect x="473" y="474" width="1" height="3" fill="#000"/>
<rect x="482" y="474" width="1" height="3" fill="#000"/>
<rect x="491" y="474" width="1" height="3" fill="#000"/>
<rect x="500" y="474" width="1" height="3" fill="#000"/>
<rect x="509" y="474" width="1" height="3" fill="#000"/>
<rect x="518" y="474" width="1" height="3" fill="#000"/>
<rect x="527" y="474" width="1" height="3" fill="#000"/>
<rect x="536" y="474" width="1" height="6" fill="#000"/>
<rect x="544" y="474" width="1" height="3" fill="#000"/>
<rect x="553" y="474" width="1" height="3" fill="#000"/>
<rect x="562" y="474" width="1" height="3" fill="#000"/>
<rect x="571" y="474" width="1" height="3" fill="#000"/>
<rect x="580" y="474" width="1" height="3" fill="#000"/>
<rect x="589" y="474" width="1" height="3" fill="#000"/>
<rect x="598" y="474" width="1" height="3" fill="#000"/>
<rect x="607" y="474" width="1" height="3" fill="#000"/>
<rect x="616" y="474" width="1" height="3" fill="#000"/>
<rect x="625" y="474" width="1" height="6" fill="#000"/>
<rect x="634" y="474" width="1" height="3" fill="#000"/>
<rect x="643" y="474" width="1" height="3" fill="#000"/>
<rect x="651" y="474" width="1" height="3" fill="#000"/>
<rect x="660" y="474" width="1" height="3" fill="#000"/>
<rect x="669" y="474" width="1" height="3" fill="#000"/>
<rect x="678" y="474" width="1" height="3" fill="#000"/>
<rect x="687" y="474" width="1" height="3" fill="#000"/>
<rect x="696" y="474" width="1" height="3" fill="#000"/>
<rect x="705" y="474" width="1" height="3" fill="#000"/>
<rect x="714" y="474" width="1" height="6" fill="#000"/>
<rect x="723" y="474" width="1" height="3" fill="#000"/>
<rect x="732" y="474" width="1" height="3" fill="#000"/>
<rect x="741" y="474" width="1" height="3" fill="#000"/>
<rect x="750" y="474" width="1" height="3" fill="#000"/>
<rect x="758" y="474" width="1" height="3" fill="#000"/>
<rect x="767" y="474" width="1" height="3" fill="#000"/>
<rect x="776" y="474" width="1" height="3" fill="#000"/>
<rect x="785" y="474" width="1" height="3" fill="#000"/>
<rect x="794" y="474" width="1" height="3" fill="#000"/>
<rect x="803" y="474" width="1" height="6" fill="#000"/>
<rect x="812" y="474" width="1" height="3" fill="#000"/>
<rect x="821" y="474" width="1" height="3" fill="#000"/>
<rect x="830" y="474" width="1" height="3" fill="#000"/>
<rect x="839" y="474" width="1" height="3" fill="#000"/>
<rect x="848" y="474" width="1" height="3" fill="#000"/>
<rect x="857" y="474" width="1" height="3" fill="#000"/>
<rect x="865" y="474" width="1" height="3" fill="#000"/>
<rect x="874" y="474" width="1" height="3" fill="#000"/>
<rect x="883" y="474" width="1" height="3" fill="#000"/>
<text x="2" y="490" font-size="10" font-family="Liberation Serif, serif" fill="#000">hms</text>
<text x="90.5" y="490" font-size="10" text-anchor="middle" fill="#000">1</text>
<text x="179.5" y="490" font-size="10" text-anchor="middle" fill="#000">2</text>
<text x="268.5" y="490" font-size="10" text-anchor="middle" fill="#000">3</text>
<text x="357.5" y="490" font-size="10" text-anchor="middle" fill="#000">4</text>
<text x="446.5" y="490" font-size="10" text-anchor="middle" fill="#000">5</text>
<text x="536.5" y="490" font-size="10" text-anchor="middle" fill="#000">6</text>
<text x="625.5" y="490" font-size="10" text-anchor="middle" fill="#000">7</text>
<text x="714.5" y="490" font-size="10" text-anchor="middle" fill="#000">8</text>
<text x="803.5" y="490" font-size="10" text-anchor="middle" fill="#000">9</text>
<text x="905" y="9" font-size="10" font-family="Liberation Serif, serif" fill="#000">dB</text>
<rect x="895" y="25" width="7" height="1" fill="#000"/>
<rect x="895" y="31" width="3" height="1" fill="#000"/>
<text x="908" y="29" font-size="10" fill="#000">0</text>
<rect x="895" y="38" width="7" height="1" fill="#000"/>
<rect x="895" y="44" width="3" height="1" fill="#000"/>
<text x="908" y="42" font-size="10" fill="#000">0</text>
<rect x="895" y="50" width="7" height="1" fill="#000"/>
<rect x="895" y="57" width="3" height="1" fill="#000"/>
<text x="908" y="54" font-size="10" fill="#000">−1</text>
<rect x="895" y="63" width="7" height="1" fill="#000"/>
<rect x="895" y="69" width="3" height="1" fill="#000"/>
<text x="908" y="67" font-size="10" fill="#000">−1</text>
<rect x="895" y="76" width="7" height="1" fill="#000"/>
<rect x="895" y="83" width="3" height="1" fill="#000"/>
<text x="908" y="80" font-size="10" fill="#000">−2</text>
<rect x="895" y="89" width="7" height="1" fill="#000"/>
<rect x="895" y="95" width="3" height="1" fill="#000"/>
<text x="908" y="93" font-size="10" fill="#000">−3</text>
<rect x="895" y="102" width="7" height="1" fill="#000"/>
<rect x="895" y="108" width="3" height="1" fill="#000"/>
<text x="908" y="106" font-size="10" fill="#000">−3</text>
<rect x="895" y="114" width="7" height="1" fill="#000"/>
<rect x="895" y="121" width="3" height="1" fill="#000"/>
<text x="908" y="118" font-size="10" fill="#000">−4</text>
<rect x="895" y="127" width="7" height="1" fill="#000"/>
<rect x="895" y="133" width="3" height="1" fill="#000"/>
<text x="908" y="131" font-size="10" fill="#000">−5</text>
<rect x="895" y="140" width="7" height="1" fill="#000"/>
<rect x="895" y="147" width="3" height="1" fill="#000"/>
<text x="908" y="144" font-size="10" fill="#000">−6</text>
<rect x="895" y="153" width="7" height="1" fill="#000"/>
<rect x="895" y="159" width="3" height="1" fill="#000"/>
<text x="908" y="157" font-size="10" fill="#000">−7</text>
<rect x="895" y="166" width="7" height="1" fill="#000"/>
<rect x="895" y="172" width="3" height="1" fill="#000"/>
<text x="908" y="170" font-size="10" fill="#000">−9</text>
<rect x="895" y="178" width="7" height="1" fill="#000"/>
<rect x="895" y="185" width="3" height="1" fill="#000"/>
<text x="908" y="182" font-size="10" fill="#000">−10</text>
<rect x="895" y="191" width="7" height="1" fill="#000"/>
<rect x="895" y="197" width="3" height="1" fill="#000"/>
<text x="908" y="195" font-size="10" fill="#000">−12</text>
<rect x="895" y="204" width="7" height="1" fill="#000"/>
<rect x="895" y="211" width="3" height="1" fill="#000"/>
<text x="908" y="208" font-size="10" fill="#000">−15</text>
<rect x="895" y="217" width="7" height="1" fill="#000"/>
<rect x="895" y="223" width="3" height="1" fill="#000"/>
<text x="908" y="221" font-size="10" fill="#000">−18</text>
<rect x="895" y="230" width="7" height="1" fill="#000"/>
<rect x="895" y="236" width="3" height="1" fill="#000"/>
<text x="908" y="234" font-size="10" fill="#000">−24</text>
<rect x="895" y="242" width="7" height="1" fill="#000"/>
<rect x="895" y="248" width="3" height="1" fill="#000"/>
<text x="908" y="246" font-size="10" fill="#000">−90</text>
<rect x="895" y="254" width="7" height="1" fill="#000"/>
<rect x="895" y="261" width="3" height="1" fill="#000"/>
<text x="908" y="258" font-size="10" fill="#000">−24</text>
<rect x="895" y="267" width="7" height="1" fill="#000"/>
<rect x="895" y="273" width="3" height="1" fill="#000"/>
<text x="908" y="271" font-size="10" fill="#000">−18</text>
<rect x="895" y="280" width="7" height="1" fill="#000"/>
<rect x="895" y="287" width="3" height="1" fill="#000"/>
<text x="908" y="284" font-size="10" fill="#000">−15</text>
<rect x="895" y="293" width="7" height="1" fill="#000"/>
<rect x="895" y="299" width="3" height="1" fill="#000"/>
<text x="908" y="297" font-size="10" fill="#000">−12</text>
<rect x="895" y="306" width="7" height="1" fill="#000"/>
<rect x="895" y="312" width="3" height="1" fill="#000"/>
<text x="908" y="310" font-size="10" fill="#000">−10</text>
<rect x="895" y="318" width="7" height="1" fill="#000"/>
<rect x="895" y="325" width="3" height="1" fill="#000"/>
<text x="908" y="322" font-size="10" fill="#000">−9</text>
<rect x="895" y="331" width="7" height="1" fill="#000"/>
<rect x="895" y="337" width="3" height="1" fill="#000"/>
<text x="908" y="335" font-size="10" fill="#000">−7</text>
<rect x="895" y="344" width="7" height="1" fill="#000"/>
<rect x="895" y="351" width="3" height="1" fill="#000"/>
<text x="908" y="348" font-size="10" fill="#000">−6</text>
<rect x="895" y="357" width="7" height="1" fill="#000"/>
<rect x="895" y="363" width="3" height="1" fill="#000"/>
<text x="908" y="361" font-size="10" fill="#000">−5</text>
<rect x="895" y="370" width="7" height="1" fill="#000"/>
<rect x="895" y="376" width="3" height="1" fill="#000"/>
<text x="908" y="374" font-size="10" fill="#000">−4</text>
<rect x="895" y="382" width="7" height="1" fill="#000"/>
<rect x="895" y="389" width="3" height="1" fill="#000"/>
<text x="908" y="386" font-size="10" fill="#000">−3</text>
<rect x="895" y="395" width="7" height="1" fill="#000"/>
<rect x="895" y="401" width="3" height="1" fill="#000"/>
<text x="908" y="399" font-size="10" fill="#000">−3</text>
<rect x="895" y="408" width="7" height="1" fill="#000"/>
<rect x="895" y="415" width="3" height="1" fill="#000"/>
<text x="908" y="412" font-size="10" fill="#000">−2</text>
<rect x="895" y="421" width="7" height="1" fill="#000"/>
<rect x="895" y="427" width="3" height="1" fill="#000"/>
<text x="908" y="425" font-size="10" fill="#000">−1</text>
<rect x="895" y="434" width="7" height="1" fill="#000"/>
<rect x="895" y="440" width="3" height="1" fill="#000"/>
<text x="908" y="438" font-size="10" fill="#000">−1</text>
<rect x="895" y="446" width="7" height="1" fill="#000"/>
<rect x="895" y="453" width="3" height="1" fill="#000"/>
<text x="908" y="450" font-size="10" fill="#000">0</text>
<rect x="895" y="459" width="7" height="1" fill="#000"/>
<text x="908" y="463" font-size="10" fill="#000">0</text>
<rect x="935" y="0" width="13" height="494" fill="#000"/>
<rect x="952" y="0" width="14" height="494" fill="#000"/>
</svg>
<div class="st" style="left:2px;width:229px;top:667px"></div>
<div class="st" style="left:235px;width:636px;top:667px"></div>
<div class="st" style="left:875px;width:254px;top:667px"></div>
<svg class="a" style="left:1117px;top:670px" width="13" height="13" viewBox="0 0 13 13"><rect x="10" y="2" width="2" height="2" fill="#fff"/><rect x="9" y="1" width="2" height="2" fill="#a8a59a"/><rect x="6" y="6" width="2" height="2" fill="#fff"/><rect x="5" y="5" width="2" height="2" fill="#a8a59a"/><rect x="10" y="6" width="2" height="2" fill="#fff"/><rect x="9" y="5" width="2" height="2" fill="#a8a59a"/><rect x="2" y="10" width="2" height="2" fill="#fff"/><rect x="1" y="9" width="2" height="2" fill="#a8a59a"/><rect x="6" y="10" width="2" height="2" fill="#fff"/><rect x="5" y="9" width="2" height="2" fill="#a8a59a"/><rect x="10" y="10" width="2" height="2" fill="#fff"/><rect x="9" y="9" width="2" height="2" fill="#a8a59a"/></svg>
</div>
<div id="bb"></div>
</div>
</body></html>
